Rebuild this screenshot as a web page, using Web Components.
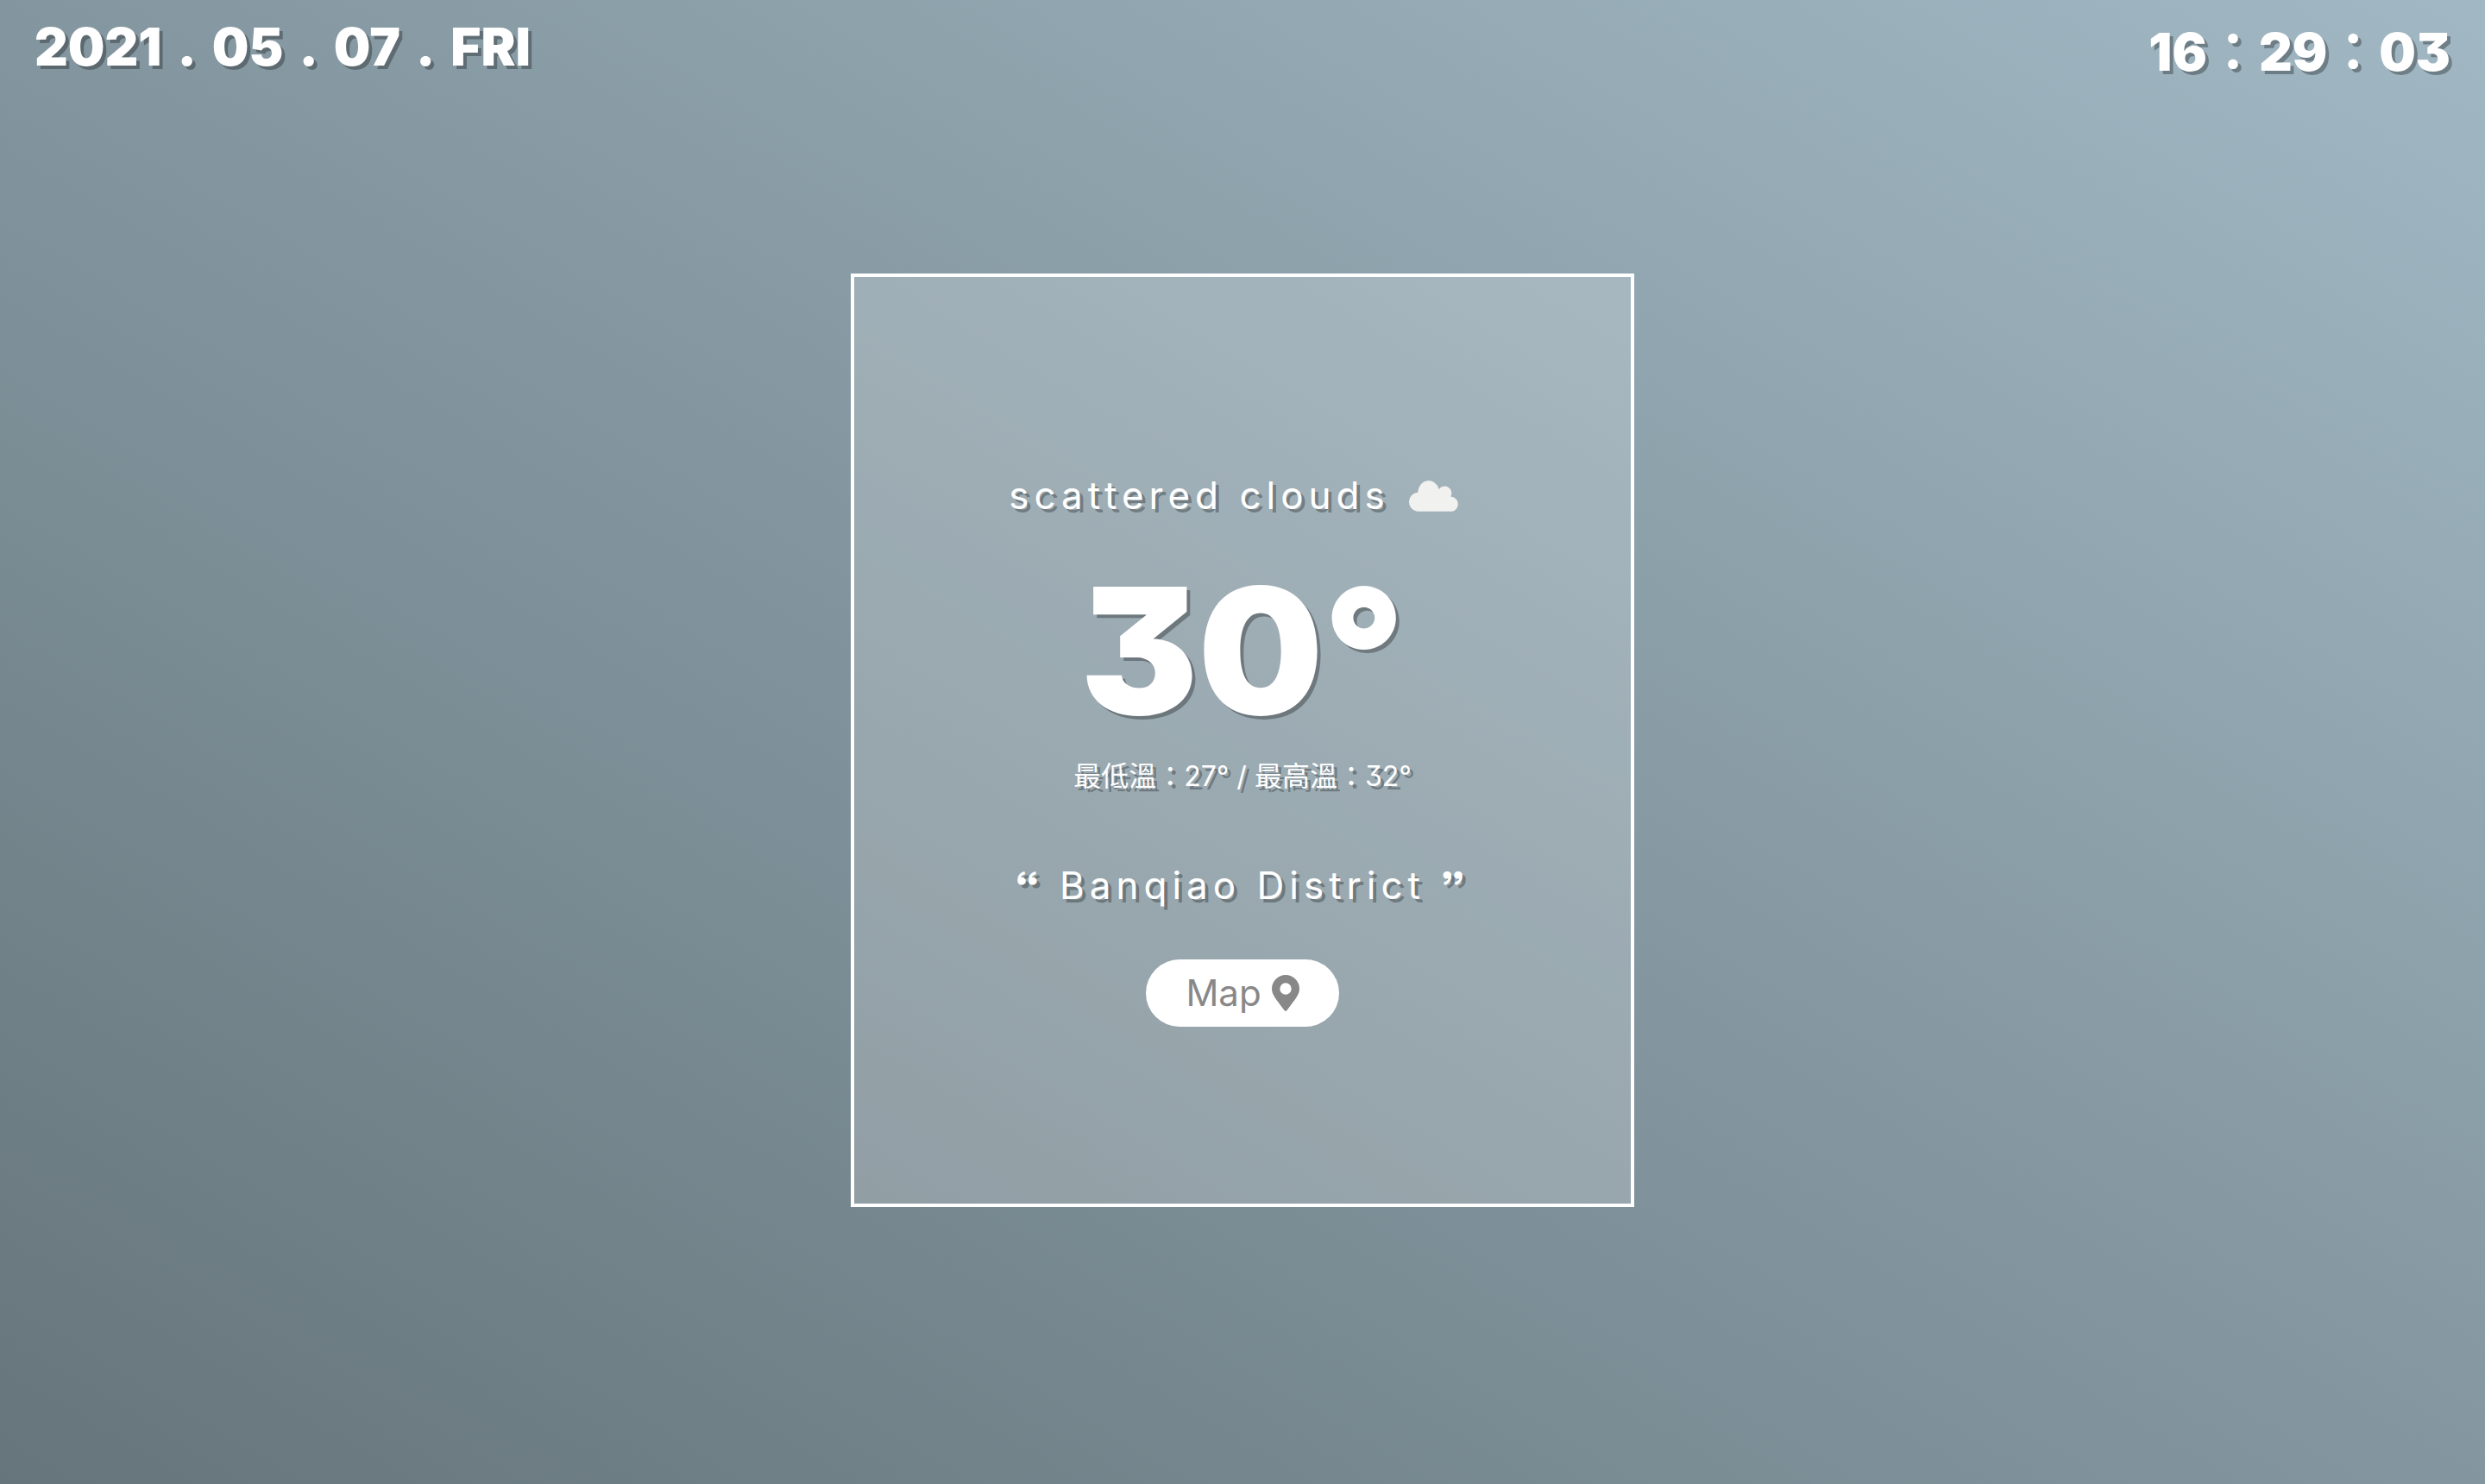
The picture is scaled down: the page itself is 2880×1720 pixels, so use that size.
<!DOCTYPE html>
<html lang="zh-Hant">
<head>
<meta charset="utf-8">
<title>Weather</title>
<style>
  html, body { margin: 0; height: 100%; }
  body { font-family: Inter, "Noto Sans CJK TC", sans-serif; font-feature-settings: "cv09", "ss03"; color: #fff; }
</style>
</head>
<body>
<weather-app>
  <date-label slot="bar"></date-label>
  <time-label slot="bar"></time-label>
  <weather-card>
    <span slot="summary">scattered clouds</span>
    <span slot="temp">30°</span>
    <span slot="range">最低溫：27° / 最高溫：32°</span>
    <span slot="place">Banqiao District</span>
  </weather-card>
</weather-app>
<script>
const define = (name, html) => customElements.define(name, class extends HTMLElement {
  constructor() {
    super();
    this.attachShadow({ mode: 'open' }).innerHTML = html;
  }
});

define('weather-app', `
<style>
  :host {
    display: flex; flex-direction: column; min-height: 100vh; box-sizing: border-box;
    text-shadow: 4px 4px 0 rgba(0, 0, 0, .3);
    background: linear-gradient(to top right, #66757b, #a1b8c4);
  }
  header { display: flex; justify-content: space-between; padding: 24px 40px 0; height: 72px; box-sizing: border-box; }
  main { flex: 1; display: flex; justify-content: center; align-items: center; padding-bottom: 76px; }
</style>
<header><slot name="bar"></slot></header>
<main><slot></slot></main>`);

define('date-label', `
<style>
  :host { display: flex; gap: 18px; font-size: 60px; line-height: 60px; font-weight: 900; white-space: nowrap; }
</style>
<span>2021</span> <span>.</span> <span>05</span> <span>.</span> <span>07</span> <span>.</span> <span>FRI</span>`);

define('time-label', `
<style>
  :host { display: block; margin-top: 6px; font-size: 60px; line-height: 60px; font-weight: 900; white-space: nowrap; }
  i { font-style: normal; font-weight: 700; }
</style>
<span>16</span><i>：</i><span>29</span><i>：</i><span>03</span>`);

define('weather-card', `
<style>
  :host {
    display: flex; flex-direction: column; align-items: center; justify-content: center;
    box-sizing: border-box; width: 908px; height: 1082px; padding-top: 22px;
    border: 4px solid #fff; background: rgba(255, 255, 255, .2);
  }
  .line { display: flex; align-items: center; font-size: 44px; line-height: 52px; letter-spacing: 6px; white-space: nowrap; }
  .cloud { width: 60px; height: 38px; margin: 0 20px; }
  .temp { font-size: 204px; line-height: 252px; font-weight: 900; margin-top: 28px; }
  .range { font-size: 32px; line-height: 40px; margin-bottom: 80px; font-weight: 400; white-space: nowrap; }
  .place { gap: 18px; }
  .place b { font-weight: 900; }
  button {
    display: flex; align-items: center; gap: 12px; height: 78px; margin-top: 60px; padding: 0 46px;
    border: 0; border-radius: 39px; background: #fff; color: #888; font: 42px/52px Inter, sans-serif; text-shadow: none;
  }
  .pin { width: 32px; height: 42px; }
</style>
<div class="line summary"><slot name="summary"></slot>
  <svg class="cloud" viewBox="0 0 59 37" fill="#f1f1f0" aria-hidden="true"><path d="M11 37A11 11 0 0 1 12 15.200A12.300 14 0 0 1 36 11.500A8 8 0 0 1 49.500 20A8.600 8.600 0 0 1 51 37Z"/></svg>
</div>
<div class="temp"><slot name="temp"></slot></div>
<div class="range"><slot name="range"></slot></div>
<div class="line place"><b>“</b><slot name="place"></slot><b>”</b></div>
<button type="button">Map
  <svg class="pin" viewBox="0 0 32 42" fill="#888" aria-hidden="true"><path fill-rule="evenodd" d="M14.500 41C4 27 0 22.500 0 16a16 16 0 0 1 32 0C32 22.500 28 27 17.500 41a2 2 0 0 1-3 0ZM16 22.700a6.700 6.700 0 1 0 0-13.400a6.700 6.700 0 0 0 0 13.400Z"/></svg>
</button>`);
</script>
</body>
</html>
